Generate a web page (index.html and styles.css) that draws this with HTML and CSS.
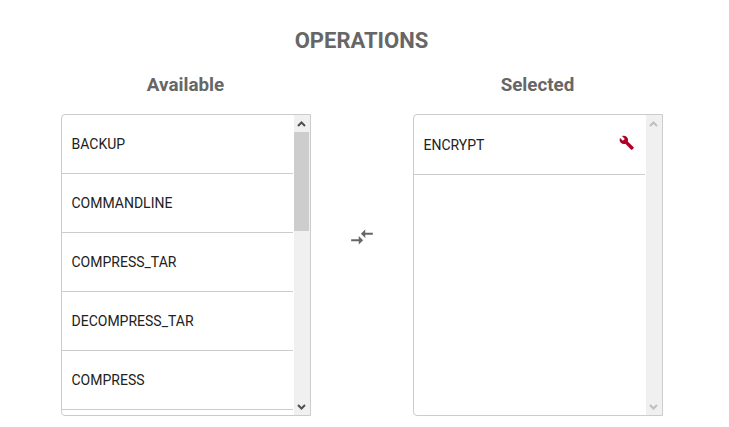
FILE: index.html
```html
<!DOCTYPE html>
<html lang="en">
<head>
<meta charset="utf-8">
<title>Operations</title>
<link rel="stylesheet" href="styles.css">
</head>
<body>
<main class="operations">
  <h1 class="title">OPERATIONS</h1>
  <div class="columns">
    <section class="column">
      <h2 class="heading">Available</h2>
      <div class="panel">
        <ul class="list">
          <li class="item">BACKUP</li>
          <li class="item">COMMANDLINE</li>
          <li class="item">COMPRESS_TAR</li>
          <li class="item">DECOMPRESS_TAR</li>
          <li class="item">COMPRESS</li>
        </ul>
        <div class="scrollbar">
          <svg class="arrow" viewBox="0 0 17 17"><path d="M5 11 8.5 7.5 12 11"/></svg>
          <div class="track"><div class="thumb"></div></div>
          <svg class="arrow" viewBox="0 0 17 17"><path d="M5 7 8.5 10.5 12 7"/></svg>
        </div>
      </div>
    </section>
    <div class="swap">
      <svg class="swap-icon" viewBox="0 0 24 24"><path d="M9.01 14H2v2h7.01v3L13 15l-3.99-4v3zm5.98-1v-3H22V8h-7.01V5L11 9l3.99 4z"/></svg>
    </div>
    <section class="column">
      <h2 class="heading">Selected</h2>
      <div class="panel">
        <ul class="list">
          <li class="item selected">ENCRYPT
            <svg class="wrench" viewBox="0 0 24 24"><path d="M22.7 19l-9.1-9.1c.9-2.3.4-5-1.5-6.9-2-2-5-2.4-7.4-1.3L9 6 6 9 1.6 4.7C.4 7.1.9 10.1 2.9 12.1c1.9 1.9 4.6 2.4 6.9 1.5l9.1 9.1c.4.4 1 .4 1.4 0l2.3-2.3c.5-.4.5-1.1.1-1.4z"/></svg>
          </li>
        </ul>
        <div class="scrollbar disabled">
          <svg class="arrow" viewBox="0 0 17 17"><path d="M5 11 8.5 7.5 12 11"/></svg>
          <div class="track"></div>
          <svg class="arrow" viewBox="0 0 17 17"><path d="M5 7 8.5 10.5 12 7"/></svg>
        </div>
      </div>
    </section>
  </div>
</main>
</body>
</html>
```
FILE: styles.css
```css
* { box-sizing: border-box; }
body { margin: 0; background: #fff; font-family: Roboto, sans-serif; overflow: hidden; }
.operations { width: 723px; padding-top: 26px; }
.title { margin: 0; height: 29px; line-height: 29px; font-size: 22px; font-weight: 700; text-align: center; color: #666; }
.columns { display: flex; padding: 17px 0 0 61px; }
.column { width: 250px; }
.heading { margin: 0; height: 42px; padding-right: 1px; line-height: 27px; font-size: 18.8px; font-weight: 700; text-align: center; color: #666; }
.panel { display: flex; height: 302px; border: 1px solid #ccc; border-radius: 4px 0 0 4px; overflow: hidden; }
.list { flex: 1; margin: 0 1px 0 0; padding: 0; list-style: none; overflow: hidden; }
.item { height: 59px; line-height: 59px; padding: 0 11px 0 9.5px; border-bottom: 1px solid #ccc; font-size: 14px; color: #212121; }
.selected { display: flex; align-items: center; justify-content: space-between; height: 60px; padding-top: 2px; line-height: 59px; }
.wrench { width: 15.5px; height: 15.5px; margin-top: -6px; fill: #b00028; }
.scrollbar { display: flex; flex-direction: column; width: 16px; background: #f0f0f0; }
.arrow { flex: none; width: 17px; height: 17px; margin-left: -1px; fill: none; stroke: #505050; stroke-width: 2; }
.disabled .arrow { stroke: #bfbfbf; }
.track { flex: 1; }
.thumb { width: 15px; height: 99px; background: #cdcdcd; }
.swap { width: 102px; padding-top: 152px; text-align: center; }
.swap-icon { width: 26px; height: 26px; fill: #666; }
```
